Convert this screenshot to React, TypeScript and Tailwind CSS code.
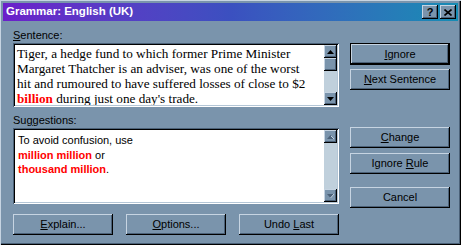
import React from 'react';

const BODY = 'bg-[#7a94ac]';
const RAISED =
  'shadow-[inset_-1px_-1px_0_#000,inset_1px_1px_0_#c6d4e2,inset_-2px_-2px_0_#4b6178]';
const SUNKEN =
  'shadow-[inset_1px_1px_0_#4b6178,inset_-1px_-1px_0_#fff,inset_2px_2px_0_#000,inset_-2px_-2px_0_#b4c6d6]';

function Btn({
  children,
  def,
  className = '',
}: {
  children: React.ReactNode;
  def?: boolean;
  className?: string;
}) {
  if (def) {
    return (
      <div className={`border border-black ${className}`}>
        <div className={`h-full flex items-center justify-center ${BODY} ${RAISED}`}>{children}</div>
      </div>
    );
  }
  return (
    <div className={`flex items-center justify-center ${BODY} ${RAISED} ${className}`}>{children}</div>
  );
}

function Arrow({ up, disabled }: { up?: boolean; disabled?: boolean }) {
  return (
    <div className={`w-[13px] h-[13px] flex items-center justify-center ${BODY} ${RAISED}`}>
      <svg width="7" height="4" viewBox="0 0 7 4">
        <path
          d={up ? 'M3.5 0 L7 4 L0 4 Z' : 'M0 0 L7 0 L3.5 4 Z'}
          fill={disabled ? '#4b6178' : '#000'}
        />
        {disabled && <path d={up ? 'M4 1 L7 4' : 'M3.5 4 L7 0'} stroke="#c6d4e2" strokeWidth="1" />}
      </svg>
    </div>
  );
}

function Scrollbar({ thumb, disabled }: { thumb?: boolean; disabled?: boolean }) {
  return (
    <div className="w-[13px] flex flex-col bg-[#c0d0dc]">
      <Arrow up disabled={disabled} />
      {thumb && <div className={`w-[13px] h-[13px] ${BODY} ${RAISED}`} />}
      <div className="flex-1" />
      <Arrow disabled={disabled} />
    </div>
  );
}

export default function App() {
  return (
    <div
      className={`w-[461px] h-[245px] ${BODY} flex flex-col p-[3px] text-[11px] text-black shadow-[inset_1px_1px_0_#c6d4e2,inset_-1px_-1px_0_#000,inset_-2px_-2px_0_#4b6178]`}
      style={{ fontFamily: '"Liberation Sans", Arial, sans-serif' }}
    >
      {/* title bar */}
      <div className="h-[18px] flex items-center justify-between pl-[3px] pr-[2px] bg-linear-to-r from-[#6a1fca] via-[#3b50c0] to-[#158cb4]">
        <span className="text-white font-bold text-[11.5px] leading-none">Grammar: English (UK)</span>
        <div className="flex gap-[2px]">
          <div className={`w-[16px] h-[14px] flex items-center justify-center ${BODY} ${RAISED} font-bold text-[11px] leading-none`}>
            ?
          </div>
          <div className={`w-[16px] h-[14px] flex items-center justify-center ${BODY} ${RAISED}`}>
            <svg width="8" height="7" viewBox="0 0 8 7">
              <path d="M0.5 0.5 L7.5 6.5 M7.5 0.5 L0.5 6.5" stroke="#000" strokeWidth="1.6" />
            </svg>
          </div>
        </div>
      </div>

      <div className="flex pl-[10px] gap-[11px]">
        {/* left column */}
        <div className="w-[326px] flex flex-col">
          <div className="mt-[8px] h-[14px] leading-[13px]">
            <u>S</u>entence:
          </div>
          <div className={`h-[64px] bg-white flex p-[2px] ${SUNKEN}`}>
            <div
              className="flex-1 pl-[2px] pt-[1px] text-[13.2px] leading-[15px] whitespace-nowrap overflow-hidden"
              style={{ fontFamily: '"Liberation Serif", "Times New Roman", serif' }}
            >
              <div>Tiger, a hedge fund to which former Prime Minister</div>
              <div>Margaret Thatcher is an adviser, was one of the worst</div>
              <div>hit and rumoured to have suffered losses of close to $2</div>
              <div>
                <b className="text-[#ff0000]">billion</b> during just one day's trade.
              </div>
            </div>
            <Scrollbar thumb />
          </div>

          <div className="mt-[7px] h-[14px] leading-[13px]">
            Su<u>g</u>gestions:
          </div>
          <div className={`h-[76px] bg-white flex p-[2px] ${SUNKEN}`}>
            <div className="flex-1 pl-[3px] pt-[3px] leading-[14.5px]">
              <div>To avoid confusion, use</div>
              <div>
                <b className="text-[#ff0000]">million million</b> or
              </div>
              <div>
                <b className="text-[#ff0000]">thousand million</b>.
              </div>
            </div>
            <Scrollbar disabled />
          </div>

          <div className="mt-[10px] flex gap-[13px]">
            <Btn className="w-[100px] h-[21px]">
              <span>
                <u>E</u>xplain...
              </span>
            </Btn>
            <Btn className="w-[100px] h-[21px]">
              <span>
                <u>O</u>ptions...
              </span>
            </Btn>
            <Btn className="w-[100px] h-[21px]">
              <span>
                Undo <u>L</u>ast
              </span>
            </Btn>
          </div>
        </div>

        {/* right column */}
        <div className="w-[100px] flex flex-col pt-[22px]">
          <Btn def className="h-[22px]">
            <span>
              <u>I</u>gnore
            </span>
          </Btn>
          <Btn className="h-[21px] mt-[4px]">
            <span>
              <u>N</u>ext Sentence
            </span>
          </Btn>
          <Btn className="h-[21px] mt-[37px]">
            <span>
              <u>C</u>hange
            </span>
          </Btn>
          <Btn className="h-[21px] mt-[5px]">
            <span>
              Ignore <u>R</u>ule
            </span>
          </Btn>
          <Btn className="h-[21px] mt-[13px]">
            <span>Cancel</span>
          </Btn>
        </div>
      </div>
    </div>
  );
}
